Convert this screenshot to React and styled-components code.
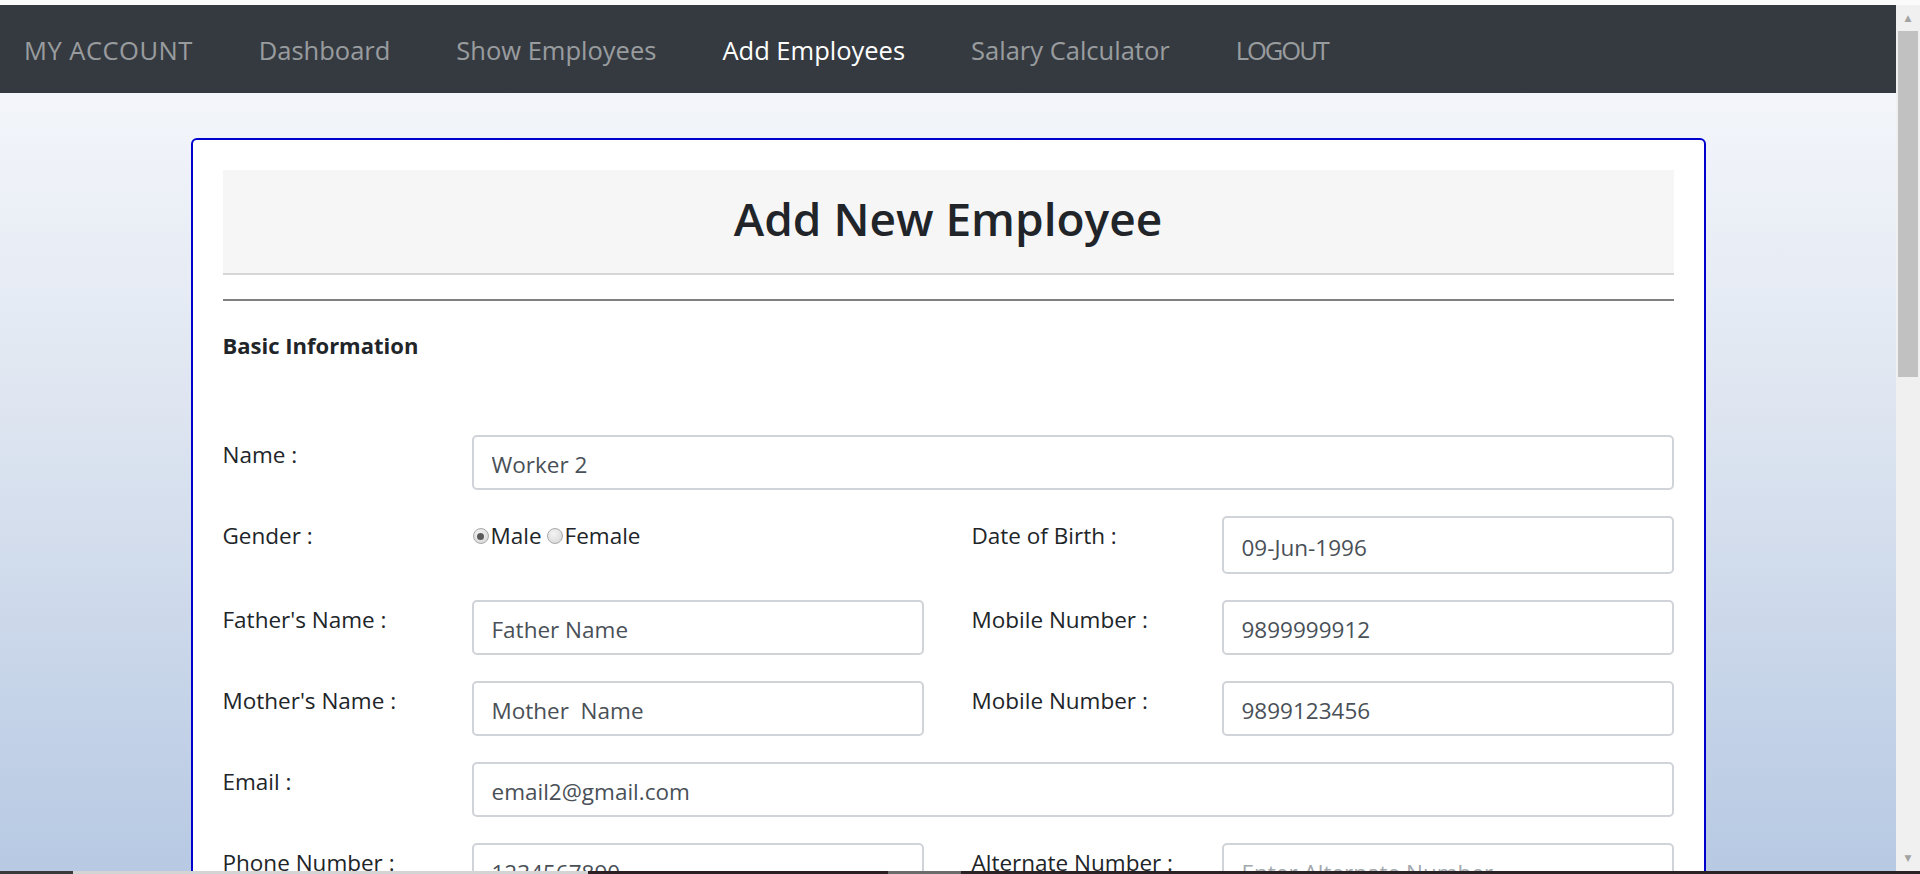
import styled, { createGlobalStyle } from "styled-components";

const GlobalStyle = createGlobalStyle`
  html, body {
    margin: 0;
    padding: 0;
    overflow: hidden;
  }
  body {
    font-family: "Open Sans", "Noto Sans", "Liberation Sans", sans-serif;
    color: #212529;
  }
  * {
    box-sizing: border-box;
  }
`;

const navItems = [
  { label: "MY ACCOUNT", spacing: 0.5 },
  { label: "Dashboard" },
  { label: "Show Employees" },
  { label: "Add Employees", active: true },
  { label: "Salary Calculator" },
  { label: "LOGOUT", spacing: -2 },
];

const taskbar = [
  { w: 73, c: "#3a3a3a" },
  { w: 515, c: "#d4d4d4" },
  { w: 300, c: "#2b1f23" },
  { w: 73, c: "#6b6b6b" },
  { w: 959, c: "#2a2224" },
];

const App = () => {
  return (
    <>
      <GlobalStyle />
      <Screen>
        <TopStrip />
        <Middle>
          <Page>
            <Nav>
              {navItems.map((item) => (
                <NavLink key={item.label} $active={item.active} $spacing={item.spacing}>
                  {item.label}
                </NavLink>
              ))}
            </Nav>

            <Main>
              <Card>
                <Header>
                  <Title>Add New Employee</Title>
                </Header>
                <Divider />
                <SectionTitle>Basic Information</SectionTitle>

                <FormGrid>
                  <Label>Name :</Label>
                  <Input $wide defaultValue="Worker 2" />

                  <Label>Gender :</Label>
                  <RadioGroup>
                    <Radio type="radio" name="gender" defaultChecked />
                    <span>Male</span>
                    <Radio type="radio" name="gender" />
                    <span>Female</span>
                  </RadioGroup>
                  <Label $right>Date of Birth :</Label>
                  <Input $h={58} defaultValue="09-Jun-1996" />

                  <Label>Father's Name :</Label>
                  <Input defaultValue="Father Name" />
                  <Label $right>Mobile Number :</Label>
                  <Input defaultValue="9899999912" />

                  <Label>Mother's Name :</Label>
                  <Input defaultValue="Mother  Name" />
                  <Label $right>Mobile Number :</Label>
                  <Input defaultValue="9899123456" />

                  <Label>Email :</Label>
                  <Input $wide defaultValue="email2@gmail.com" />

                  <Label>Phone Number :</Label>
                  <Input defaultValue="1234567890" />
                  <Label $right>Alternate Number :</Label>
                  <Input placeholder="Enter Alternate Number" />

                  <Label>Address :</Label>
                  <Input $wide placeholder="Enter Address" />

                  <Label>City :</Label>
                  <Input placeholder="Enter City" />
                  <Label $right>Pin Code :</Label>
                  <Input placeholder="Enter Pin Code" />
                </FormGrid>
              </Card>
            </Main>
          </Page>

          <Rail>
            <RailButton>▲</RailButton>
            <Track>
              <Thumb />
            </Track>
            <RailButton>▼</RailButton>
          </Rail>
        </Middle>
        <BottomStrip>
          {taskbar.map((s, i) => (
            <Segment key={i} $w={s.w} $c={s.c} />
          ))}
        </BottomStrip>
      </Screen>
    </>
  );
};

export default App;

const Screen = styled.div`
  height: 100vh;
  display: flex;
  flex-direction: column;
  background: #fff;
`;

const TopStrip = styled.div`
  height: 5px;
  flex: 0 0 5px;
  background: #fbfbfb;
`;

const BottomStrip = styled.div`
  height: 3px;
  flex: 0 0 3px;
  display: flex;
  background: #2a2224;
`;

const Segment = styled.div`
  width: ${(p) => p.$w}px;
  background: ${(p) => p.$c};
`;

const Middle = styled.div`
  flex: 1;
  min-height: 0;
  display: flex;
`;

const Page = styled.div`
  flex: 1;
  overflow: hidden;
  background: linear-gradient(to bottom, #f9fafd 0%, #dfe6f1 45%, #b7c9e3 100%);
`;

const Nav = styled.nav`
  height: 88px;
  background: #343a40;
  display: flex;
  align-items: center;
  gap: 66px;
  padding: 2px 0 0 24px;
`;

const NavLink = styled.a`
  font-size: 25.5px;
  letter-spacing: ${(p) => p.$spacing || 0}px;
  color: ${(p) => (p.$active ? "#ffffff" : "rgba(255, 255, 255, 0.5)")};
  cursor: pointer;
  white-space: nowrap;
`;

const Main = styled.main`
  padding-top: 45px;
  padding-bottom: 2600px;
`;

const Card = styled.div`
  width: 1515px;
  margin: 0 auto;
  background: #fff;
  border: 2px solid #0000cd;
  border-radius: 6px;
  padding: 30px 30px 60px;
`;

const Header = styled.div`
  height: 105px;
  background: #f6f6f6;
  border-bottom: 2px solid #d6d6d6;
  display: flex;
  align-items: center;
  justify-content: center;
  padding-bottom: 8px;
`;

const Title = styled.h1`
  margin: 0;
  font-size: 46px;
  font-weight: 600;
  color: #212529;
`;

const Divider = styled.hr`
  margin: 24px 0 0;
  border: 0;
  border-top: 2px solid #808080;
`;

const SectionTitle = styled.h5`
  margin: 31px 0 77px;
  font-size: 22px;
  font-weight: 700;
  line-height: 26px;
`;

const FormGrid = styled.div`
  display: grid;
  grid-template-columns: 249px 452px 48px 250px 452px;
  row-gap: 26px;
  align-items: start;
`;

const Label = styled.label`
  grid-column: ${(p) => (p.$right ? "4" : "1")};
  padding-top: 5px;
  font-size: 22.5px;
  line-height: 30px;
  color: #212529;
  white-space: nowrap;
`;

const Input = styled.input`
  grid-column: ${(p) => (p.$wide ? "2 / 6" : "auto")};
  height: ${(p) => p.$h || 55}px;
  width: 100%;
  padding: 4px 18px 0;
  font-family: inherit;
  font-size: 22.5px;
  color: #495057;
  background: #fff;
  border: 2px solid #d0d3d8;
  border-radius: 5px;
  outline: none;

  &::placeholder {
    color: #a3a8ad;
  }
`;

const RadioGroup = styled.div`
  grid-column: 2;
  display: flex;
  align-items: center;
  padding-top: 5px;
  font-size: 22.5px;
  line-height: 30px;
  color: #212529;

  span + input {
    margin-left: 5px;
  }
`;

const Radio = styled.input`
  appearance: none;
  width: 16px;
  height: 16px;
  margin: 0 2px 0 1px;
  border-radius: 50%;
  border: 1px solid #a9a9a9;
  background: radial-gradient(circle at 40% 35%, #f4f4f4, #d3d3d3);
  display: grid;
  place-items: center;

  &:checked::after {
    content: "";
    width: 7px;
    height: 7px;
    border-radius: 50%;
    background: #5a5a5a;
  }
`;

const Rail = styled.div`
  width: 24px;
  flex: 0 0 24px;
  background: #f0f0f0;
  display: flex;
  flex-direction: column;
`;

const RailButton = styled.div`
  height: 26px;
  display: flex;
  align-items: center;
  justify-content: center;
  font-size: 9px;
  color: #a3a3a3;
  font-family: "DejaVu Sans", sans-serif;
`;

const Track = styled.div`
  flex: 1;
  padding: 0 2px;
`;

const Thumb = styled.div`
  height: 346px;
  background: #c1c1c1;
`;
